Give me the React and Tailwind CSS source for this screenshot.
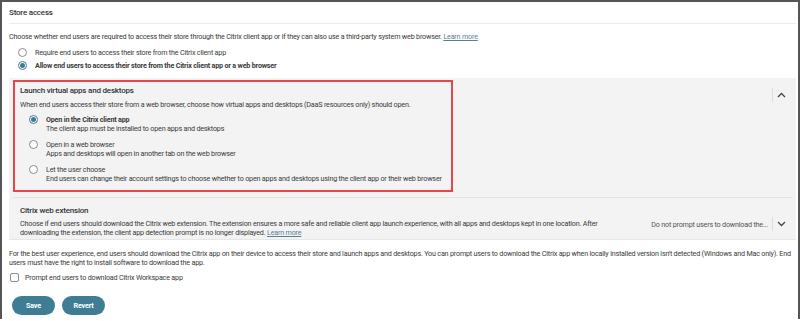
import React from 'react';

function Radio({ checked }) {
  return (
    <span
      className={`w-[9px] h-[9px] rounded-full border shrink-0 flex items-center justify-center bg-white ${
        checked ? 'border-[#3d7b93]' : 'border-[#8a8a8a]'
      }`}
    >
      {checked && <span className="w-[5px] h-[5px] rounded-full bg-[#3d7b93]" />}
    </span>
  );
}

function Chevron({ up }) {
  return (
    <svg width="9" height="6" viewBox="0 0 9 6" className="text-[#444]">
      <path
        d={up ? 'M1 5L4.5 1.5L8 5' : 'M1 1L4.5 4.5L8 1'}
        fill="none"
        stroke="currentColor"
        strokeWidth="1.3"
      />
    </svg>
  );
}

const launchOptions = [
  {
    title: 'Open in the Citrix client app',
    sub: 'The client app must be installed to open apps and desktops',
    checked: true,
  },
  {
    title: 'Open in a web browser',
    sub: 'Apps and desktops will open in another tab on the web browser',
  },
  {
    title: 'Let the user choose',
    sub: 'End users can change their account settings to choose whether to open apps and desktops using the client app or their web browser',
  },
];

export default function App() {
  return (
    <div className="w-[800px] h-[321px] bg-white text-[7.2px] tracking-[-0.2px] leading-[9px] text-[#3a3a3a] font-['Roboto',sans-serif] whitespace-nowrap">
      <div className="h-[319px] border-t-2 border-x-2 border-[#555] flex flex-col">
        {/* header */}
        <div className="ml-[7px] mr-[2px] h-[22px] flex items-center border-b border-[#ebebeb] text-[8px] font-medium text-[#333]">
          Store access
        </div>

        <div className="pl-[7px] pt-[8px]">
          <p>
            Choose whether end users are required to access their store through the Citrix client app or if they
            can also use a third-party system web browser.{' '}
            <span className="underline text-[#5a7f93]">Learn more</span>
          </p>
          <div className="pl-[9px] mt-[7px] flex flex-col gap-[4px]">
            <label className="flex items-center gap-[8px] h-[9px]">
              <Radio />
              <span>Require end users to access their store from the Citrix client app</span>
            </label>
            <label className="flex items-center gap-[8px] h-[9px]">
              <Radio checked />
              <span className="font-bold">Allow end users to access their store from the Citrix client app or a web browser</span>
            </label>
          </div>
        </div>

        {/* gray panel */}
        <div className="ml-[7px] mr-[2px] mt-[8px] h-[162px] bg-[#f3f3f3] pt-[2px] border-b border-[#e6e6e6]">
          <div className="flex">
            <div className="ml-[4px] w-[440px] h-[112px] border-2 border-[#e8454a] pl-[5px] pt-[4px]">
              <div className="text-[8px] font-medium text-[#333]">Launch virtual apps and desktops</div>
              <p className="mt-[5px]">
                When end users access their store from a web browser, choose how virtual apps and desktops (DaaS
                resources only) should open.
              </p>
              <div className="pl-[9px] mt-[6px] flex flex-col gap-[7px]">
                {launchOptions.map((o) => (
                  <div key={o.title} className="flex gap-[8px]">
                    <Radio checked={o.checked} />
                    <div className="flex flex-col">
                      <span className={o.checked ? 'font-bold' : ''}>{o.title}</span>
                      <span>{o.sub}</span>
                    </div>
                  </div>
                ))}
              </div>
            </div>
            <div className="flex-1 flex justify-end pr-[10px] pt-[8px]">
              <div className="flex items-center h-[14px] gap-[4px]">
                <span className="w-px h-[14px] bg-[#dcdcdc]" />
                <Chevron up />
              </div>
            </div>
          </div>

          <div className="ml-[4px] mr-[3px] mt-[5px] border-t border-[#e3e3e3]" />

          <div className="pl-[11px] pr-[10px] pt-[8px] flex">
            <div>
              <div className="text-[8px] font-medium text-[#333]">Citrix web extension</div>
              <p className="mt-[4px]">
                Choose if end users should download the Citrix web extension. The extension ensures a more safe and
                reliable client app launch experience, with all apps and desktops kept in one location. After
                <br />
                downloading the extension, the client app detection prompt is no longer displayed.{' '}
                <span className="underline text-[#5a7f93]">Learn more</span>
              </p>
            </div>
            <div className="flex-1 flex justify-end items-start pt-[11px]">
              <div className="flex items-center h-[14px] gap-[4px]">
                <span className="text-[#555]">Do not prompt users to download the...</span>
                <span className="w-px h-[14px] bg-[#dcdcdc]" />
                <Chevron />
              </div>
            </div>
          </div>
        </div>

        <div className="pl-[7px] pr-[8px] pt-[9px]">
          <p>
            For the best user experience, end users should download the Citrix app on their device to access their
            store and launch apps and desktops. You can prompt users to download the Citrix app when locally
            installed version isn't detected (Windows and Mac only). End
            <br />
            users must have the right to install software to download the app.
          </p>
          <label className="mt-[6px] h-[9px] flex items-center gap-[6px] pl-[1px]">
            <span className="w-[9px] h-[9px] border border-[#8a8a8a] rounded-[2px] bg-white" />
            <span>Prompt end users to download Citrix Workspace app</span>
          </label>
          <div className="mt-[14px] flex gap-[7px] pl-[3px]">
            <button className="w-[43px] h-[19px] rounded-full bg-[#3f7d94] text-white font-bold text-[7.2px]">
              Save
            </button>
            <button className="w-[43px] h-[19px] rounded-full bg-[#3f7d94] text-white font-bold text-[7.2px]">
              Revert
            </button>
          </div>
        </div>
      </div>
    </div>
  );
}
